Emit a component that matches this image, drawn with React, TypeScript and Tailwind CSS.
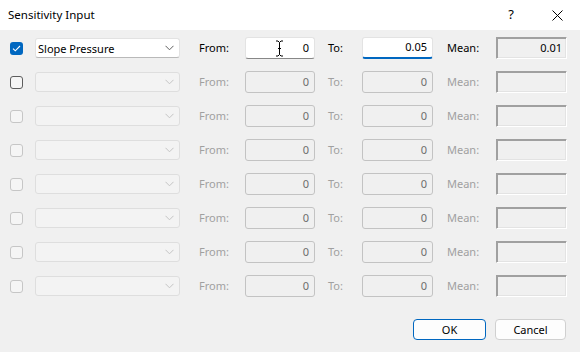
import React from 'react';

const FONT = { fontFamily: '"Noto Sans", "Open Sans", sans-serif' };

function Chevron({ disabled }: { disabled?: boolean }) {
  return (
    <svg width="9" height="6" viewBox="0 0 9 6" className="shrink-0">
      <path d="M0.5 0.8 L4.5 4.8 L8.5 0.8" fill="none" stroke={disabled ? '#c4c4c4' : '#5f5f5f'} strokeWidth="1" />
    </svg>
  );
}

function CheckBox({ state }: { state: 'checked' | 'enabled' | 'disabled' }) {
  if (state === 'checked') {
    return (
      <div className="w-[13px] h-[13px] rounded-[3px] bg-[#0067c0] flex items-center justify-center">
        <svg width="9" height="7" viewBox="0 0 9 7">
          <path d="M1 3.6 L3.3 5.8 L8 1" fill="none" stroke="#fff" strokeWidth="1.1" />
        </svg>
      </div>
    );
  }
  return (
    <div
      className={`w-[13px] h-[13px] rounded-[3px] border ${
        state === 'enabled' ? 'border-[#5d5d5d] bg-[#f5f5f5]' : 'border-[#c6c6c6] bg-[#f5f5f5]'
      }`}
    />
  );
}

function IBeam() {
  return (
    <svg width="9" height="17" viewBox="0 0 9 17" className="absolute left-[29px] top-[2px]">
      <path d="M1 1 H3 L4.5 2.5 L6 1 H8 M4.5 2.5 V14.5 M1 16 H3 L4.5 14.5 L6 16 H8 M3 8.5 H6" fill="none" stroke="#000" strokeWidth="1" />
    </svg>
  );
}

function Row({ index }: { index: number }) {
  const active = index === 0;
  const checkState = index === 0 ? 'checked' : index === 1 ? 'enabled' : 'disabled';
  const label = active ? 'text-black' : 'text-[#a0a0a0]';
  return (
    <div className="flex items-center h-[22px] pl-[10px] text-[11px]">
      <CheckBox state={checkState} />
      {active ? (
        <div className="ml-[12px] w-[145px] h-[20px] bg-white border border-[#e2e2e2] border-b-[#b9b9b9] rounded-[3px] flex items-center justify-between pl-[2px] pr-[5px]">
          <span className="text-black leading-none">Slope Pressure</span>
          <Chevron />
        </div>
      ) : (
        <div className="ml-[12px] w-[145px] h-[20px] bg-[#f3f3f3] border border-[#dedede] rounded-[3px] flex items-center justify-end pr-[5px]">
          <Chevron disabled />
        </div>
      )}

      <span className={`ml-[19px] w-[46px] ${label}`}>From:</span>
      {active ? (
        <div className="relative w-[70px] h-[22px] bg-white border border-[#e3e3e3] border-b-[#878787] rounded-[3px] flex items-center justify-end pr-[5px] text-black">
          <IBeam />
          0
        </div>
      ) : (
        <div className="w-[70px] h-[22px] border border-[#c3c3c3] rounded-[3px] flex items-center justify-end pr-[5px] text-[#6d6d6d]">
          0
        </div>
      )}

      <span className={`ml-[13px] w-[34px] ${label}`}>To:</span>
      {active ? (
        <div className="w-[71px] h-[22px] bg-white border border-[#e3e3e3] border-b-2 border-b-[#0067c0] rounded-[3px] flex items-center justify-end pr-[5px] text-black">
          0.05
        </div>
      ) : (
        <div className="w-[71px] h-[22px] border border-[#c3c3c3] rounded-[3px] flex items-center justify-end pr-[5px] text-[#6d6d6d]">
          0
        </div>
      )}

      <span className={`ml-[14px] w-[49px] ${label}`}>Mean:</span>
      <div className="w-[71px] h-[22px] border border-t-[#a0a0a0] border-l-[#a0a0a0] border-r-white border-b-white shadow-[inset_1px_1px_0_#a0a0a0,inset_-1px_-1px_0_#e3e3e3] flex items-center justify-end pr-[4px] text-black">
        {active ? '0.01' : ''}
      </div>
    </div>
  );
}

export default function App() {
  return (
    <div className="w-[580px] h-[352px] flex flex-col bg-[#f0f0f0] overflow-hidden" style={FONT}>
      {/* title bar */}
      <div className="h-[30px] bg-white flex items-center shrink-0">
        <span className="pl-[8px] text-[11.5px] text-black flex-1">Sensitivity Input</span>
        <div className="w-[46px] h-full flex items-center justify-center text-[13px] text-black">?</div>
        <div className="w-[46px] h-full flex items-center justify-center">
          <svg width="11" height="11" viewBox="0 0 11 11">
            <path d="M0.5 0.5 L10.5 10.5 M10.5 0.5 L0.5 10.5" stroke="#000" strokeWidth="1" />
          </svg>
        </div>
      </div>

      {/* rows */}
      <div className="flex flex-col gap-[12px] pt-[7px]">
        {Array.from({ length: 8 }).map((_, i) => (
          <Row key={i} index={i} />
        ))}
      </div>

      {/* buttons */}
      <div className="flex justify-end gap-[9px] pr-[14px] mt-[22px]">
        <button className="w-[73px] h-[21px] rounded-[4px] bg-[#fdfdfd] border border-[#0067c0] text-[11px] text-black leading-none">
          OK
        </button>
        <button className="w-[71px] h-[21px] rounded-[4px] bg-[#fdfdfd] border border-[#d0d0d0] text-[11px] text-black leading-none">
          Cancel
        </button>
      </div>
    </div>
  );
}
